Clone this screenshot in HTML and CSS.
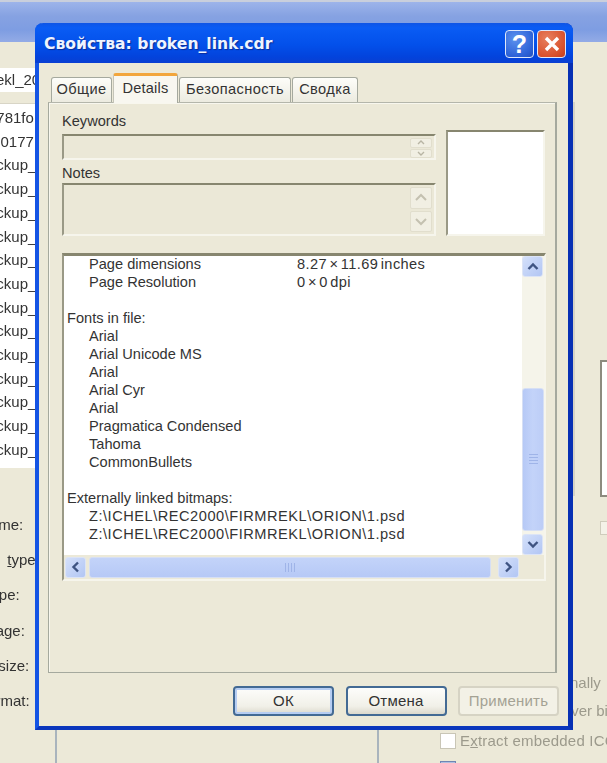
FILE: index.html
```html
<!DOCTYPE html>
<html lang="en">
<head>
    <meta charset="UTF-8">
    <meta name="viewport" content="width=device-width, initial-scale=1.0">
    <title>Свойства: broken_link.cdr</title>
    <link rel="stylesheet" href="styles.css">
</head>
<body>
    <div class="desktop">
        <!-- window behind the dialog -->
        <div class="back-window">
            <div class="back-title"></div>
            <div class="back-body">
                <div class="back-left">
                    <div class="back-input">rekl_2004</div>
                    <div class="back-list">
                        <div>d781fo</div>
                        <div>d.0177</div>
                        <div>ackup_</div>
                        <div>ackup_</div>
                        <div>ackup_</div>
                        <div>ackup_</div>
                        <div>ackup_</div>
                        <div>ackup_</div>
                        <div>ackup_</div>
                        <div>ackup_</div>
                        <div>ackup_</div>
                        <div>ackup_</div>
                        <div>ackup_</div>
                        <div>ackup_</div>
                        <div>ackup_</div>
                    </div>
                    <div class="back-labels">
                        <div>Name:</div>
                        <div class="label-file">File <u>t</u>ype</div>
                        <div class="label-type">Type:</div>
                        <div>Ima<u>g</u>e:</div>
                        <div class="label-size">File size:</div>
                        <div class="label-format">Format:</div>
                    </div>
                </div>
            </div>
        </div>

        <div class="back-line back-line-a"></div>
        <div class="back-line back-line-b"></div>
        <div class="back-line back-line-c"></div>
        <div class="back-preview"></div>
        <div class="back-check back-check-a"></div>

        <div class="back-options">
            <div class="opt">Internally</div>
            <div class="opt opt-cover">Cover bil</div>
            <div class="opt opt-check"><span class="box"></span><span>E<u>x</u>tract embedded ICC</span></div>
            <div class="opt opt-check"><span class="box box-on"></span><span></span></div>
        </div>

        <!-- properties dialog -->
        <div class="dialog">
            <div class="titlebar">
                <div class="title">Свойства: broken_link.cdr</div>
                <div class="cap-btn help">?</div>
                <div class="cap-btn close">
                    <svg width="18" height="18" viewBox="0 0 18 18"><path d="M3 3 L15 15 M15 3 L3 15" stroke="#fff" stroke-width="3.4" fill="none"/></svg>
                </div>
            </div>
            <div class="dialog-body">
                <div class="tabs">
                    <div class="tab tab-general">Общие</div>
                    <div class="tab tab-active">Details</div>
                    <div class="tab tab-security">Безопасность</div>
                    <div class="tab tab-summary">Сводка</div>
                </div>
                <div class="panel">
                    <div class="fields">
                        <div class="fields-left">
                            <div class="field-label">Keywords</div>
                            <div class="edit edit-keywords">
                                <div class="spin">
                                    <div class="spin-btn"><svg width="8" height="5" viewBox="0 0 8 5"><path d="M1 4 L4 1 L7 4" stroke="#b8b5a4" stroke-width="1.4" fill="none"/></svg></div>
                                    <div class="spin-btn"><svg width="8" height="5" viewBox="0 0 8 5"><path d="M1 1 L4 4 L7 1" stroke="#b8b5a4" stroke-width="1.4" fill="none"/></svg></div>
                                </div>
                            </div>
                            <div class="field-label field-notes">Notes</div>
                            <div class="edit edit-notes">
                                <div class="spin spin-big">
                                    <div class="spin-btn"><svg width="14" height="9" viewBox="0 0 14 9"><path d="M2 7 L7 2 L12 7" stroke="#c4c1b0" stroke-width="2" fill="none"/></svg></div>
                                    <div class="spin-btn"><svg width="14" height="9" viewBox="0 0 14 9"><path d="M2 2 L7 7 L12 2" stroke="#c4c1b0" stroke-width="2" fill="none"/></svg></div>
                                </div>
                            </div>
                        </div>
                        <div class="preview"></div>
                    </div>

                    <div class="listbox">
                        <div class="list-text">
                            <div class="line sub"><span class="key">Page dimensions</span><span class="value">8.27 × 11.69 inches</span></div>
                            <div class="line sub"><span class="key">Page Resolution</span><span class="value">0 × 0 dpi</span></div>
                            <div class="line"></div>
                            <div class="line">Fonts in file:</div>
                            <div class="line sub">Arial</div>
                            <div class="line sub">Arial Unicode MS</div>
                            <div class="line sub">Arial</div>
                            <div class="line sub">Arial Cyr</div>
                            <div class="line sub">Arial</div>
                            <div class="line sub">Pragmatica Condensed</div>
                            <div class="line sub">Tahoma</div>
                            <div class="line sub">CommonBullets</div>
                            <div class="line"></div>
                            <div class="line">Externally linked bitmaps:</div>
                            <div class="line sub path">Z:\ICHEL\REC2000\FIRMREKL\ORION\1.psd</div>
                            <div class="line sub path">Z:\ICHEL\REC2000\FIRMREKL\ORION\1.psd</div>
                        </div>
                        <div class="vscroll">
                            <div class="sb-btn"><svg width="12" height="9" viewBox="0 0 12 9"><path d="M1.5 7 L6 2.5 L10.5 7" stroke="#3f5482" stroke-width="2.4" fill="none"/></svg></div>
                            <div class="vtrack">
                                <div class="vthumb"><div class="grip grip-v"></div></div>
                            </div>
                            <div class="sb-btn"><svg width="12" height="9" viewBox="0 0 12 9"><path d="M1.5 2 L6 6.5 L10.5 2" stroke="#3f5482" stroke-width="2.4" fill="none"/></svg></div>
                        </div>
                        <div class="hscroll">
                            <div class="sb-btn"><svg width="9" height="12" viewBox="0 0 9 12"><path d="M7 1.5 L2.5 6 L7 10.5" stroke="#3f5482" stroke-width="2.4" fill="none"/></svg></div>
                            <div class="hthumb"><div class="grip grip-h"></div></div>
                            <div class="sb-btn"><svg width="9" height="12" viewBox="0 0 9 12"><path d="M2 1.5 L6.5 6 L2 10.5" stroke="#3f5482" stroke-width="2.4" fill="none"/></svg></div>
                        </div>
                    </div>
                </div>
                <div class="buttons">
                    <div class="btn btn-default">ОК</div>
                    <div class="btn">Отмена</div>
                    <div class="btn btn-disabled">Применить</div>
                </div>
            </div>
        </div>
    </div>
</body>
</html>
```

FILE: styles.css
```css
/* Global reset */
* {
    margin: 0;
    padding: 0;
    box-sizing: border-box;
}

body {
    width: 607px;
    height: 763px;
    overflow: hidden;
    background: #ece9d8;
    font-family: 'Liberation Sans', sans-serif;
    color: #333;
}

/* The shot is an upscaled one, everything is a bit soft */
.desktop {
    position: relative;
    width: 607px;
    height: 763px;
    overflow: hidden;
    filter: blur(0.55px);
}

/* Window behind */
.back-title {
    height: 42px;
    border-top: 2px solid #c9cfdc;
    background: linear-gradient(180deg, #9db4ea 0%, #86a2e2 35%, #7e9de2 70%, #93abe6 100%);
}

.back-left {
    width: 35px;
    overflow: hidden;
}

.back-input {
    width: 140px;
    margin: 26px 0 0 -13px;
    height: 24px;
    padding-left: 4px;
    background: #fff;
    font-size: 15px;
    line-height: 24px;
    white-space: nowrap;
}

.back-list {
    margin-top: 11px;
    width: 60px;
    height: 365px;
    padding-top: 2px;
    background: #fff;
    border-top: 1px solid #d8d5c6;
    font-size: 15px;
    line-height: 23.7px;
}

.back-list div {
    margin-left: -12px;
    white-space: nowrap;
}

.back-labels {
    margin-top: 39px;
    margin-left: -21px;
    width: 120px;
    font-size: 15px;
    line-height: 35.2px;
    white-space: nowrap;
}

.label-file {
    margin-left: -6px;
    word-spacing: 6px;
}

.label-type {
    margin-left: 4px;
}

.label-size {
    margin-left: -9px;
}

.label-format {
    margin-left: -1px;
}

.back-line {
    position: absolute;
    background: #a9b4bd;
}

.back-line-a {
    left: 55px;
    top: 725px;
    width: 2px;
    height: 38px;
}

.back-line-b {
    left: 377px;
    top: 725px;
    width: 2px;
    height: 38px;
}

.back-line-c {
    left: 573px;
    top: 102px;
    width: 2px;
    height: 394px;
    background: #d5d3c6;
}

.back-preview {
    position: absolute;
    left: 600px;
    top: 360px;
    width: 20px;
    height: 137px;
    background: #fff;
    border: 2px solid #8d8b7f;
}

.back-check {
    position: absolute;
    left: 600px;
    top: 521px;
    width: 14px;
    height: 14px;
    background: #f4f2e8;
    border: 1px solid #cfccbc;
}

.back-options {
    position: absolute;
    left: 440px;
    top: 669px;
    width: 200px;
    font-size: 15px;
    color: #9c9a8c;
}

.opt {
    height: 28px;
    line-height: 28px;
    padding-left: 100px;
    white-space: nowrap;
}

.opt-cover {
    padding-left: 112px;
}

.opt-check {
    display: flex;
    align-items: center;
    gap: 4px;
    padding-left: 0;
    height: 24px;
    line-height: 24px;
    margin-top: 4px;
    letter-spacing: 0.2px;
}

.box {
    width: 16px;
    height: 16px;
    background: #fff;
    border: 1px solid #c9c6b6;
    flex: none;
}

.box-on {
    background: #aebfe0;
    border-color: #6f86b4;
}

/* Dialog */
.dialog {
    position: absolute;
    left: 35px;
    top: 23px;
    width: 538px;
    height: 707px;
    border-radius: 8px 8px 0 0;
    border-left: 4px solid #1454e4;
    border-right: 5px solid #0730b4;
    border-bottom: 4px solid #0a36bc;
    background: #ece9d8;
}

.titlebar {
    display: flex;
    align-items: center;
    height: 40px;
    margin-left: -4px;
    margin-right: -5px;
    padding: 2px 7px 0 9px;
    gap: 3px;
    border-radius: 8px 8px 0 0;
    background: linear-gradient(180deg, #0f55e6 0%, #0a5cf4 12%, #0350ea 55%, #0343dc 85%, #0a3fd2 100%);
}

.title {
    flex: 1;
    color: #eef4ff;
    font-family: 'DejaVu Sans', sans-serif;
    font-size: 15.6px;
    font-weight: bold;
    text-shadow: 1px 1px 1px #0a2c9a;
    white-space: nowrap;
}

.cap-btn {
    display: flex;
    align-items: center;
    justify-content: center;
    width: 29px;
    height: 28px;
    border: 1px solid #dfe8fa;
    border-radius: 4px;
}

.help {
    background: radial-gradient(circle at 35% 30%, #5c92ee, #2d62d8 70%, #2450bc);
    color: #fff;
    font-size: 25px;
    font-weight: bold;
}

.close {
    background: radial-gradient(circle at 35% 30%, #e8805e, #d8512c 70%, #c23d1e);
}

.dialog-body {
    padding: 10px 11px 0 9px;
}

/* Tabs */
.tabs {
    display: flex;
    align-items: flex-end;
    height: 29px;
    padding-left: 3px;
    gap: 1px;
    font-size: 14.6px;
}

.tab {
    height: 25px;
    line-height: 23px;
    text-align: center;
    background: linear-gradient(180deg, #fdfdf9, #ecebe0);
    border: 1px solid #a5a99e;
    border-bottom: none;
    border-radius: 3px 3px 0 0;
    letter-spacing: 0.4px;
}

.tab-general {
    width: 61px;
}

.tab-security {
    width: 112px;
}

.tab-summary {
    width: 66px;
}

.tab-active {
    position: relative;
    z-index: 1;
    width: 65px;
    height: 30px;
    margin-bottom: -1px;
    line-height: 24px;
    background: #f8f7f0;
    border-top: 3px solid #f2a63c;
    border-left-color: #c4c4b8;
    border-right-color: #a5a99e;
    letter-spacing: 0.2px;
}

.panel {
    height: 571px;
    padding: 9px 10px 0 13px;
    background: #ece9d8;
    border: 1px solid #a5a99e;
    border-top-color: #b4b6ab;
    border-right-width: 2px;
    box-shadow: inset 1px 1px 0 #f8f7ee;
}

.fields {
    display: flex;
    gap: 10px;
}

.fields-left {
    width: 375px;
}

.field-label {
    height: 18px;
    font-size: 14.6px;
    line-height: 18px;
    margin-bottom: 4px;
}

.field-notes {
    margin-top: 4px;
    margin-bottom: 1px;
}

.edit {
    position: relative;
    display: flex;
    justify-content: flex-end;
    border-top: 2px solid #87866f;
    border-left: 2px solid #9a9986;
    border-right: 2px solid #f6f5ec;
    border-bottom: 2px solid #f6f5ec;
    background: #ebe8d7;
}

.edit-keywords {
    height: 26px;
}

.edit-notes {
    height: 53px;
}

.spin {
    display: flex;
    flex-direction: column;
    gap: 1px;
    width: 22px;
    margin-right: 2px;
    padding-top: 2px;
}

.spin-btn {
    flex: 1;
    display: flex;
    align-items: center;
    justify-content: center;
    background: #f1efe3;
    border: 1px solid #e1decd;
    border-radius: 2px;
}

.spin-big {
    gap: 2px;
    padding-bottom: 2px;
}

.preview {
    width: 99px;
    height: 106px;
    margin-top: 18px;
    background: #fff;
    border-top: 2px solid #87866f;
    border-left: 2px solid #9a9986;
    border-right: 2px solid #f6f5ec;
    border-bottom: 2px solid #f6f5ec;
}

/* Big read only list */
.listbox {
    display: grid;
    grid-template-columns: 458px 22px;
    grid-template-rows: 299px 24px;
    width: 484px;
    height: 328px;
    margin-top: 17px;
    background: #ece9d8;
    border-top: 3px solid #87866f;
    border-left: 2px solid #9a9986;
    border-right: 2px solid #f6f5ec;
    border-bottom: 2px solid #f6f5ec;
}

.list-text {
    padding: 0 0 0 3px;
    background: #fff;
    font-size: 14.6px;
    overflow: hidden;
}

.line {
    display: flex;
    height: 18px;
    line-height: 16px;
    white-space: nowrap;
}

.sub {
    padding-left: 22px;
}

.path {
    letter-spacing: 0.52px;
}

.key {
    width: 208px;
}

.value {
    word-spacing: -2px;
    letter-spacing: 0.4px;
}

.vscroll {
    display: flex;
    flex-direction: column;
    background: #f5f4ea;
}

.vtrack {
    flex: 1;
    display: flex;
    flex-direction: column;
    justify-content: flex-end;
    padding-bottom: 3px;
}

.vthumb {
    display: flex;
    align-items: center;
    justify-content: center;
    height: 143px;
    background: linear-gradient(90deg, #b6c9f6, #c3d3f9 50%, #bccdf7);
    border: 1px solid #d6dff4;
    border-radius: 3px;
}

.sb-btn {
    flex: none;
    display: flex;
    align-items: center;
    justify-content: center;
    width: 21px;
    height: 21px;
    background: linear-gradient(135deg, #d4e0fa, #b2c6f4);
    border: 1px solid #dce4f6;
    border-radius: 3px;
}

.hscroll {
    grid-column: 1 / 3;
    display: flex;
    align-items: center;
    gap: 3px;
    padding: 0 25px 0 1px;
    background: #ece9d8;
}

.hthumb {
    flex: 1;
    display: flex;
    align-items: center;
    justify-content: center;
    height: 21px;
    margin-right: 4px;
    background: linear-gradient(180deg, #c3d3f9, #b6c9f6);
    border: 1px solid #d6dff4;
    border-radius: 3px;
}

.grip-v {
    width: 9px;
    height: 11px;
    background-image: linear-gradient(180deg, #9fb4e8 1px, transparent 1px);
    background-size: 100% 3px;
}

.grip-h {
    width: 11px;
    height: 9px;
    background-image: linear-gradient(90deg, #9fb4e8 1px, transparent 1px);
    background-size: 3px 100%;
}

/* Bottom buttons */
.buttons {
    display: flex;
    justify-content: flex-end;
    gap: 11.5px;
    margin-top: 13px;
    margin-right: -2px;
}

.btn {
    width: 101px;
    height: 30px;
    line-height: 26px;
    text-align: center;
    font-size: 15px;
    background: linear-gradient(180deg, #fdfdfb, #f1f0e8 70%, #dcd9cd);
    border: 2px solid #436a94;
    border-radius: 4px;
    letter-spacing: 0.2px;
}

.btn-default {
    box-shadow: inset 0 0 0 2px #b6cdf2;
}

.btn-disabled {
    background: #f3f1e6;
    border-color: #d6d3c4;
    color: #a4a294;
}
```
